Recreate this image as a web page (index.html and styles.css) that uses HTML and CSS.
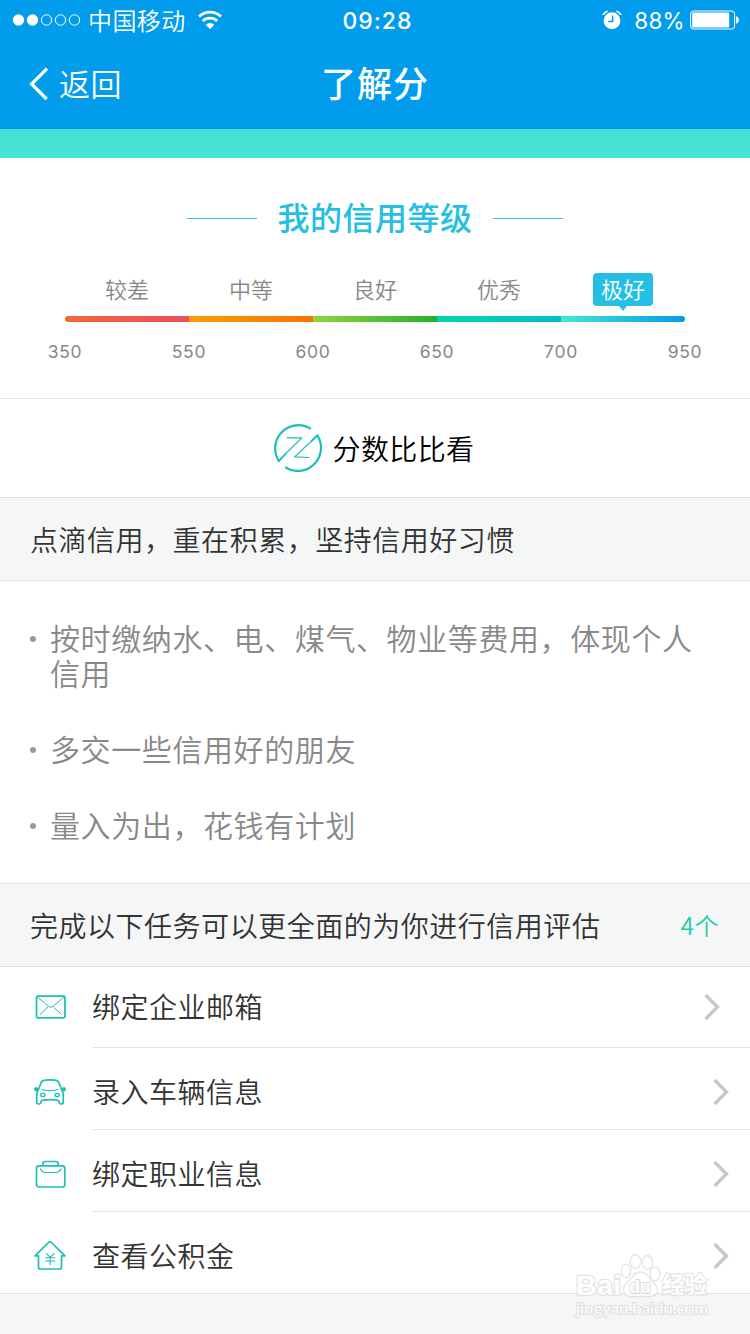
FILE: index.html
```html
<!DOCTYPE html>
<html lang="zh-CN">
<head>
<meta charset="utf-8">
<title>了解分</title>
<link rel="stylesheet" href="styles.css">
</head>
<body>
<header class="header">
  <div class="status">
    <div class="status-left">
      <svg class="signal" width="70" height="14" viewBox="0 0 70 14"><g stroke="#fff" fill="none"><circle cx="6.5" cy="7" r="5.2" fill="#fff"/><circle cx="20.5" cy="7" r="5.2" fill="#fff"/><circle cx="34.5" cy="7" r="5.2"/><circle cx="48.5" cy="7" r="5.2"/><circle cx="62.5" cy="7" r="5.2"/></g></svg>
      <span class="carrier">中国移动</span>
      <svg class="wifi" width="26" height="20" viewBox="0 0 26 20"><g fill="none" stroke="#fff" stroke-width="2.8"><path d="M2 6.6a16 16 0 0 1 22 0"/><path d="M5.8 10.9a10.5 10.5 0 0 1 14.4 0"/></g><path d="M13 19l-4.300-4.200a6.200 6.200 0 0 1 8.600 0z" fill="#fff"/></svg>
    </div>
    <span class="time">09:28</span>
    <div class="status-right">
      <svg width="20" height="20" viewBox="0 0 20 20"><circle cx="10" cy="10.7" r="8.4" fill="#fff"/><path d="M1 4.8A7 7 0 0 1 5.6 1.2M19 4.8a7 7 0 0 0-4.6-3.6" stroke="#fff" stroke-width="1.6" fill="none"/><path d="M10.6 5.5v6H6.2" stroke="#019dec" stroke-width="1.5" fill="none"/></svg>
      <span class="percent">88%</span>
      <svg width="50" height="20" viewBox="0 0 50 20"><rect x=".6" y="1" width="44" height="18" rx="3" fill="none" stroke="#fff"/><rect x="2.200" y="2.600" width="37" height="14.800" rx="1.200" fill="#fff"/><path d="M46 6.500h.7c3 1.200 3 5.800 0 7H46z" fill="#fff"/></svg>
    </div>
  </div>
  <nav class="nav">
    <div class="back">
      <svg width="20" height="34" viewBox="0 0 20 34"><path d="M18 1.600L2.600 17 17.600 32" fill="none" stroke="#fff" stroke-width="3.200"/></svg>
      <span>返回</span>
    </div>
    <h1 class="title">了解分</h1>
  </nav>
</header>
<div class="band"></div>
<section class="grade">
  <h2 class="grade-title"><span>我的信用等级</span></h2>
  <div class="levels">
    <div class="level"><span>较差</span></div>
    <div class="level"><span>中等</span></div>
    <div class="level"><span>良好</span></div>
    <div class="level"><span>优秀</span></div>
    <div class="level"><span class="current">极好</span></div>
  </div>
  <div class="bar"><i class="red"></i><i class="orange"></i><i class="green"></i><i class="teal"></i><i class="blue"></i></div>
  <div class="scores"><span>350</span><span>550</span><span>600</span><span>650</span><span>700</span><span>950</span></div>
</section>
<section class="compare">
  <svg width="48" height="48" viewBox="0.5 0.5 47 47"><g fill="none" stroke="#1cc0b4" stroke-linejoin="round"><path d="M36.700 5.300A22.700 22.700 0 0 0 5.300 36.700" stroke-width="2.200"/><path d="M11.500 42.800A22.700 22.700 0 0 0 43 11.600" stroke-width="2.200"/><path d="M4.500 37.500L12.500 28.900M43.600 11L36.500 17.900" stroke-width="1.800"/><path d="M12.900 14.100H27.700L12.500 28.900" stroke-width="1.200"/><path d="M36.500 17.900L20.700 32.700 35.300 33.300" stroke-width="1.200"/></g></svg>
  <span>分数比比看</span>
</section>
<div class="section-head"><span>点滴信用，重在积累，坚持信用好习惯</span></div>
<ul class="tips">
  <li>按时缴纳水、电、煤气、物业等费用，体现个人信用</li>
  <li>多交一些信用好的朋友</li>
  <li>量入为出，花钱有计划</li>
</ul>
<div class="section-head tasks-head"><span>完成以下任务可以更全面的为你进行信用评估</span><span class="count">4个</span></div>
<div class="tasks">
  <div class="task first">
    <svg class="icon" width="36" height="36" viewBox="0 0 36 36"><g fill="none" stroke="#1cc0b4"><rect x="4.500" y="7.200" width="28.500" height="21.600" rx="1.500" stroke-width="1.800"/><path d="M5.500 8l10.800 9.300q2.400 2 4.800 0L32 8M8 25.500l8-7.500M29.500 25.500l-8-7.500" stroke-width="1"/></g></svg>
    <div class="task-body"><span>绑定企业邮箱</span><svg class="chevron" width="16" height="28" viewBox="0 0 16 28"><path d="M1.500 2L13.500 14 1.500 26" fill="none" stroke="#c7c7cc" stroke-width="3.400"/></svg></div>
  </div>
  <div class="task">
    <svg class="icon" width="36" height="36" viewBox="0 0 36 36"><g fill="none" stroke="#1cc0b4" stroke-width="1.700" stroke-linejoin="round"><path d="M6.500 15.500L9 9Q10 6.300 13 6.100Q18 5.600 23 6.100Q26 6.300 27 9L29.500 15.500Q31.300 18 31.300 21V28Q31.300 30 29 30Q27 30 26.500 26.500Q18 24.800 9.500 26.500Q9 30 7 30Q4.700 30 4.700 28V21Q4.700 18 6.500 15.500"/><ellipse cx="10.800" cy="21" rx="2" ry="1.600" stroke-width="1.400"/><ellipse cx="25.200" cy="21" rx="2" ry="1.600" stroke-width="1.400"/><path d="M9.500 15.500q8.500 2.200 17 0" stroke-width="1.100"/></g><path d="M6.700 14l-2.700-.9q-2 .2-2 2.100 0 2 2.200 2.200l1.500-.5zM29.300 14l2.700-.9q2 .2 2 2.100 0 2-2.200 2.200l-1.500-.5z" fill="#1cc0b4"/></svg>
    <div class="task-body"><span>录入车辆信息</span><svg class="chevron" width="16" height="28" viewBox="0 0 16 28"><path d="M1.500 2L13.500 14 1.500 26" fill="none" stroke="#c7c7cc" stroke-width="3.400"/></svg></div>
  </div>
  <div class="task">
    <svg class="icon" width="36" height="36" viewBox="0 0 36 36"><g fill="none" stroke="#1cc0b4" stroke-width="1.700"><rect x="4.500" y="9.800" width="28.300" height="21.200" rx="2.500"/><path d="M10.700 9.500V8q0-2.500 2.500-2.500h10.500q2.500 0 2.500 2.500v1.500"/><path d="M8 12.500q2 4 5.500 4h10.300q3.500 0 5.500-4" stroke-width="1.200"/></g></svg>
    <div class="task-body"><span>绑定职业信息</span><svg class="chevron" width="16" height="28" viewBox="0 0 16 28"><path d="M1.500 2L13.500 14 1.500 26" fill="none" stroke="#c7c7cc" stroke-width="3.400"/></svg></div>
  </div>
  <div class="task last">
    <svg class="icon" width="36" height="36" viewBox="0 0 36 36"><g fill="none" stroke="#1cc0b4" stroke-width="1.700" stroke-linejoin="round"><path d="M3 17.800L16.500 4.500q1.500-1.300 3 0L33 17.800H29.500V29q0 2-2 2h-19q-2 0-2-2V17.800z"/><path d="M14 15.200l4.200 4.200 4.200-4.200M18.200 19.400V27M13.200 19.800h10M13.200 23h10" stroke-width="1.100"/></g></svg>
    <div class="task-body"><span>查看公积金</span><svg class="chevron" width="16" height="28" viewBox="0 0 16 28"><path d="M1.500 2L13.500 14 1.500 26" fill="none" stroke="#c7c7cc" stroke-width="3.400"/></svg></div>
  </div>
</div>
<svg class="watermark" width="160" height="80" viewBox="0 0 160 80">
  <g fill="#fff" stroke="#dcdcdc" stroke-width="2.400" paint-order="stroke" stroke-linejoin="round">
    <text class="wm-brand" x="5" y="43" textLength="45" lengthAdjust="spacingAndGlyphs">Bai</text>
    <text class="wm-cn" x="91" y="41" textLength="45" lengthAdjust="spacingAndGlyphs">经验</text>
    <text class="wm-url" x="5" y="61.500" textLength="132" lengthAdjust="spacingAndGlyphs">jingyan.baidu.com</text>
  </g>
  <g fill="#fff" stroke="#dcdcdc" stroke-width="1.300">
    <ellipse cx="55" cy="19" rx="4.700" ry="6.800"/><ellipse cx="64.500" cy="9.500" rx="5.200" ry="7"/><ellipse cx="76.500" cy="10.500" rx="5.200" ry="7"/><ellipse cx="84" cy="22" rx="5" ry="6.800"/>
    <path d="M69 20C62 20 62 26 56 30.500C50 36 52 44.500 60 44.500H78C87 44.500 89 37 83 31C78 27 77 20 69 20z"/>
  </g>
  <text class="wm-du" x="58.500" y="40.500" fill="#fff" stroke="#d0d0d0" stroke-width="2" paint-order="stroke" textLength="21" lengthAdjust="spacingAndGlyphs">du</text>
</svg>
</body>
</html>
```

FILE: styles.css
```css
* { box-sizing: border-box; }

body {
  margin: 0;
  height: 1334px;
  position: relative;
  overflow: hidden;
  background: #f5f7f7;
  color: #333;
  font-family: "Noto Sans CJK SC", sans-serif;
  font-weight: 350;
}

h1, h2, ul { margin: 0; padding: 0; }
svg { display: block; flex: none; }

.header { height: 129px; background: #019dec; color: #fff; }

.status {
  height: 40px;
  display: grid;
  grid-template-columns: 1fr auto 1fr;
  align-items: center;
  padding: 0 10px 0 12px;
}
.status-left, .status-right { display: flex; align-items: center; }
.status-right { justify-content: flex-end; }
.carrier { margin-left: 6px; font-size: 24px; line-height: 38px; letter-spacing: .4px; }
.wifi { margin-left: 11px; }
.time { padding: 2px 0 0 3px; font: 500 23px/38px Inter, sans-serif; letter-spacing: 1px; }
.percent { margin: 0 5px 0 12px; padding-top: 2px; font: 400 22.5px/38px Inter, sans-serif; letter-spacing: .3px; }

.nav {
  height: 89px;
  display: grid;
  grid-template-columns: 1fr auto 1fr;
  align-items: center;
  padding: 0 0 2px 29px;
}
.back { display: flex; align-items: center; gap: 10px; font-size: 31px; line-height: 40px; letter-spacing: .5px; }
.back span { margin-bottom: 1px; }
.title { margin: 0 29px 4px 0; font-size: 35px; font-weight: 500; line-height: 44px; letter-spacing: 1px; }

.band { height: 29px; background: linear-gradient(#45dfd3, #48e5d7); }

.grade { height: 241px; padding-top: 39px; background: #fff; border-bottom: 1px solid #e1e3e3; }
.grade-title {
  display: flex;
  justify-content: center;
  align-items: center;
  gap: 20px;
  height: 42px;
  color: #24bfe3;
  font-size: 32px;
  font-weight: 500;
  line-height: 42px;
  letter-spacing: .5px;
}
.grade-title span { margin-bottom: 4px; }
.grade-title::before, .grade-title::after { content: ""; width: 70px; height: 1px; background: #24bfe3; }

.levels { display: flex; height: 43px; margin: 34px 65px 0; color: #888; }
.level { flex: 1; display: flex; justify-content: center; align-items: flex-start; font-size: 22px; line-height: 31px; }
.current { position: relative; width: 60px; height: 33px; text-align: center; background: #24bfe3; color: #fff; border-radius: 4px; }
.current::after {
  content: "";
  position: absolute;
  top: 33px;
  left: 26px;
  border: 4px solid transparent;
  border-top: 5px solid #24bfe3;
  border-bottom: 0;
}

.bar { display: flex; height: 6px; margin: 0 65px; border-radius: 3px; overflow: hidden; }
.bar i { flex: 1; }
.red { background: linear-gradient(90deg, #f4663c, #e94f5b); }
.orange { background: linear-gradient(90deg, #fa9d04, #f87204); }
.green { background: linear-gradient(90deg, #91d440, #25b02b); }
.teal { background: linear-gradient(90deg, #03d3ae, #02bfc8); }
.blue { background: linear-gradient(90deg, #49e4d5, #22bfe2 50%, #039cee); }

.scores {
  display: grid;
  grid-template-columns: repeat(6, 124px);
  margin: 17px 3px 0;
  text-align: center;
  color: #888;
  font: 400 17.5px/25px Inter, sans-serif;
  letter-spacing: .7px;
}

.compare {
  height: 99px;
  display: flex;
  align-items: center;
  justify-content: center;
  gap: 11px;
  background: #fff;
  border-bottom: 1px solid #e1e3e3;
  color: #000;
  font-size: 28px;
  line-height: 36px;
  letter-spacing: .4px;
}
.compare span { margin-right: 1px; margin-left: -1px; }

.section-head {
  height: 83px;
  display: flex;
  justify-content: space-between;
  align-items: center;
  padding: 0 31px 1px 30px;
  border-bottom: 1px solid #e1e3e3;
  font-size: 28px;
  line-height: 36px;
  letter-spacing: .52px;
}
.count { color: #1dc8b0; font-size: 24px; }

.tips {
  height: 303px;
  padding: 39px 30px 0;
  background: #fff;
  border-bottom: 1px solid #e1e3e3;
  color: #888;
  list-style: none;
  font-size: 30px;
  line-height: 35px;
  letter-spacing: .6px;
}
.tips li { display: flex; margin-bottom: 41px; }
.tips li::before { content: ""; flex: none; width: 6px; height: 6px; margin: 16px 14px 0 0; border-radius: 50%; background: #999; }

.tasks { background: #fff; }
.task { height: 82px; display: flex; align-items: stretch; padding-left: 32px; }
.task.first { height: 81px; }
.task .icon { margin: 26px 24px 0 0; }
.task.first .icon { margin-top: 22px; }
.task-body {
  flex: 1;
  display: flex;
  justify-content: space-between;
  padding: 25px 21px 0 0;
  border-bottom: 1px solid #e1e3e3;
  font-size: 28px;
  line-height: 37px;
  letter-spacing: .5px;
}
.first .task-body { padding: 21px 30px 0 0; }
.chevron { margin-top: 5px; }
.last { border-bottom: 1px solid #e1e3e3; }
.last .task-body { border-bottom: 0; }

.watermark { position: absolute; left: 571px; top: 1252px; opacity: .75; }
.wm-brand { font: 700 27px "Liberation Sans", sans-serif; }
.wm-cn { font: 700 23px "Noto Sans CJK SC", sans-serif; }
.wm-url { font: 400 15px Lato, sans-serif; }
.wm-du { font: 700 18px "Liberation Sans", sans-serif; }
```
